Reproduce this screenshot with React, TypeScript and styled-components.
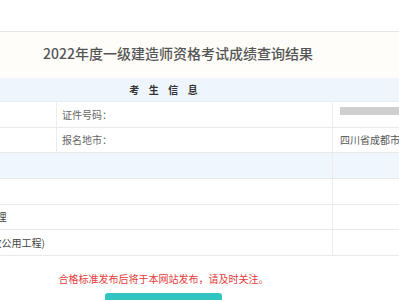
import React from "react";
import styled, { createGlobalStyle } from "styled-components";

const Global = createGlobalStyle`
  html, body { margin: 0; padding: 0; background: #ffffff; }
  body {
    width: 399px;
    height: 300px;
    overflow: hidden;
    font-family: "Noto Sans CJK SC", "Noto Sans", sans-serif;
  }
`;

const Page = styled.div`
  margin-left: -120px;
  width: 567px;
`;

const TopBar = styled.div`
  height: 31px;
  border-bottom: 1px solid #e7e7e7;
  background: #ffffff;
`;

const TitleRow = styled.div`
  height: 46px;
  box-sizing: border-box;
  padding: 0 0 5px 163px;
  display: flex;
  align-items: center;
  background: #fefdf9;
  font-family: "Noto Sans CJK SC", sans-serif;
  font-size: 14px;
  font-weight: 500;
  color: #555;
  white-space: nowrap;
`;

const Table = styled.div`
  display: flex;
  flex-direction: column;
`;

const HeaderRow = styled.div`
  height: 24px;
  box-sizing: border-box;
  display: flex;
  align-items: center;
  justify-content: center;
  background: #eef5fc;
  border-bottom: 1px solid #e4ecf4;
  font-size: 10px;
  font-weight: bold;
  color: #333;
  letter-spacing: 9.5px;
  padding-left: 9.5px;
`;

const Row = styled.div<{ $blue?: boolean }>`
  height: 25.67px;
  box-sizing: border-box;
  display: grid;
  grid-template-columns: 177px 276px 1fr;
  border-bottom: 1px solid #e9e9e9;
  background: ${(p) => (p.$blue ? "#f0f6fd" : "#ffffff")};
`;

const Cell = styled.div<{ $divider?: boolean; $pad?: number }>`
  display: flex;
  align-items: center;
  padding-left: ${(p) => p.$pad ?? 0}px;
  border-right: ${(p) => (p.$divider ? "1px solid #ececec" : "none")};
  font-size: 10px;
  color: #555;
  white-space: nowrap;
  min-width: 0;
`;

const SubjectCell = styled(Cell)`
  justify-content: center;
  padding-right: 4px;
  color: #444;
`;

const Label = styled.span`
  color: #666;
`;

const Redacted = styled.span`
  display: block;
  width: 62px;
  height: 8px;
  margin-top: -6px;
  background: #cfcfcf;
  filter: blur(0.5px);
`;

const Notice = styled.div`
  padding-top: 16px;
  line-height: 14px;
  font-size: 10px;
  color: #e23b3b;
  text-align: center;
  white-space: nowrap;
`;

const ButtonWrap = styled.div`
  display: flex;
  justify-content: center;
  padding-top: 7px;
`;

const Button = styled.button`
  width: 117px;
  height: 30px;
  border: none;
  border-radius: 3px;
  background: #31c4c0;
  color: #fff;
  font-family: "Noto Sans CJK SC", sans-serif;
  font-size: 12px;
`;

export default function App() {
  return (
    <>
      <Global />
      <Page>
        <TopBar />
        <TitleRow>2022年度一级建造师资格考试成绩查询结果</TitleRow>
        <Table>
          <HeaderRow>考生信息</HeaderRow>
          <Row>
            <Cell $divider />
            <Cell $divider $pad={5}>
              <Label>证件号码：</Label>
            </Cell>
            <Cell $pad={7}>
              <Redacted />
            </Cell>
          </Row>
          <Row>
            <Cell $divider />
            <Cell $divider $pad={5}>
              <Label>报名地市：</Label>
            </Cell>
            <Cell $pad={7}>四川省成都市</Cell>
          </Row>
          <Row $blue>
            <Cell />
            <Cell $divider />
            <Cell />
          </Row>
          <Row>
            <Cell />
            <Cell $divider />
            <Cell />
          </Row>
          <Row>
            <SubjectCell>建设工程项目管理</SubjectCell>
            <Cell $divider />
            <Cell />
          </Row>
          <Row>
            <SubjectCell>专业工程管理与实务(市政公用工程)</SubjectCell>
            <Cell $divider />
            <Cell />
          </Row>
        </Table>
        <Notice>合格标准发布后将于本网站发布，请及时关注。</Notice>
        <ButtonWrap>
          <Button>返回</Button>
        </ButtonWrap>
      </Page>
    </>
  );
}
